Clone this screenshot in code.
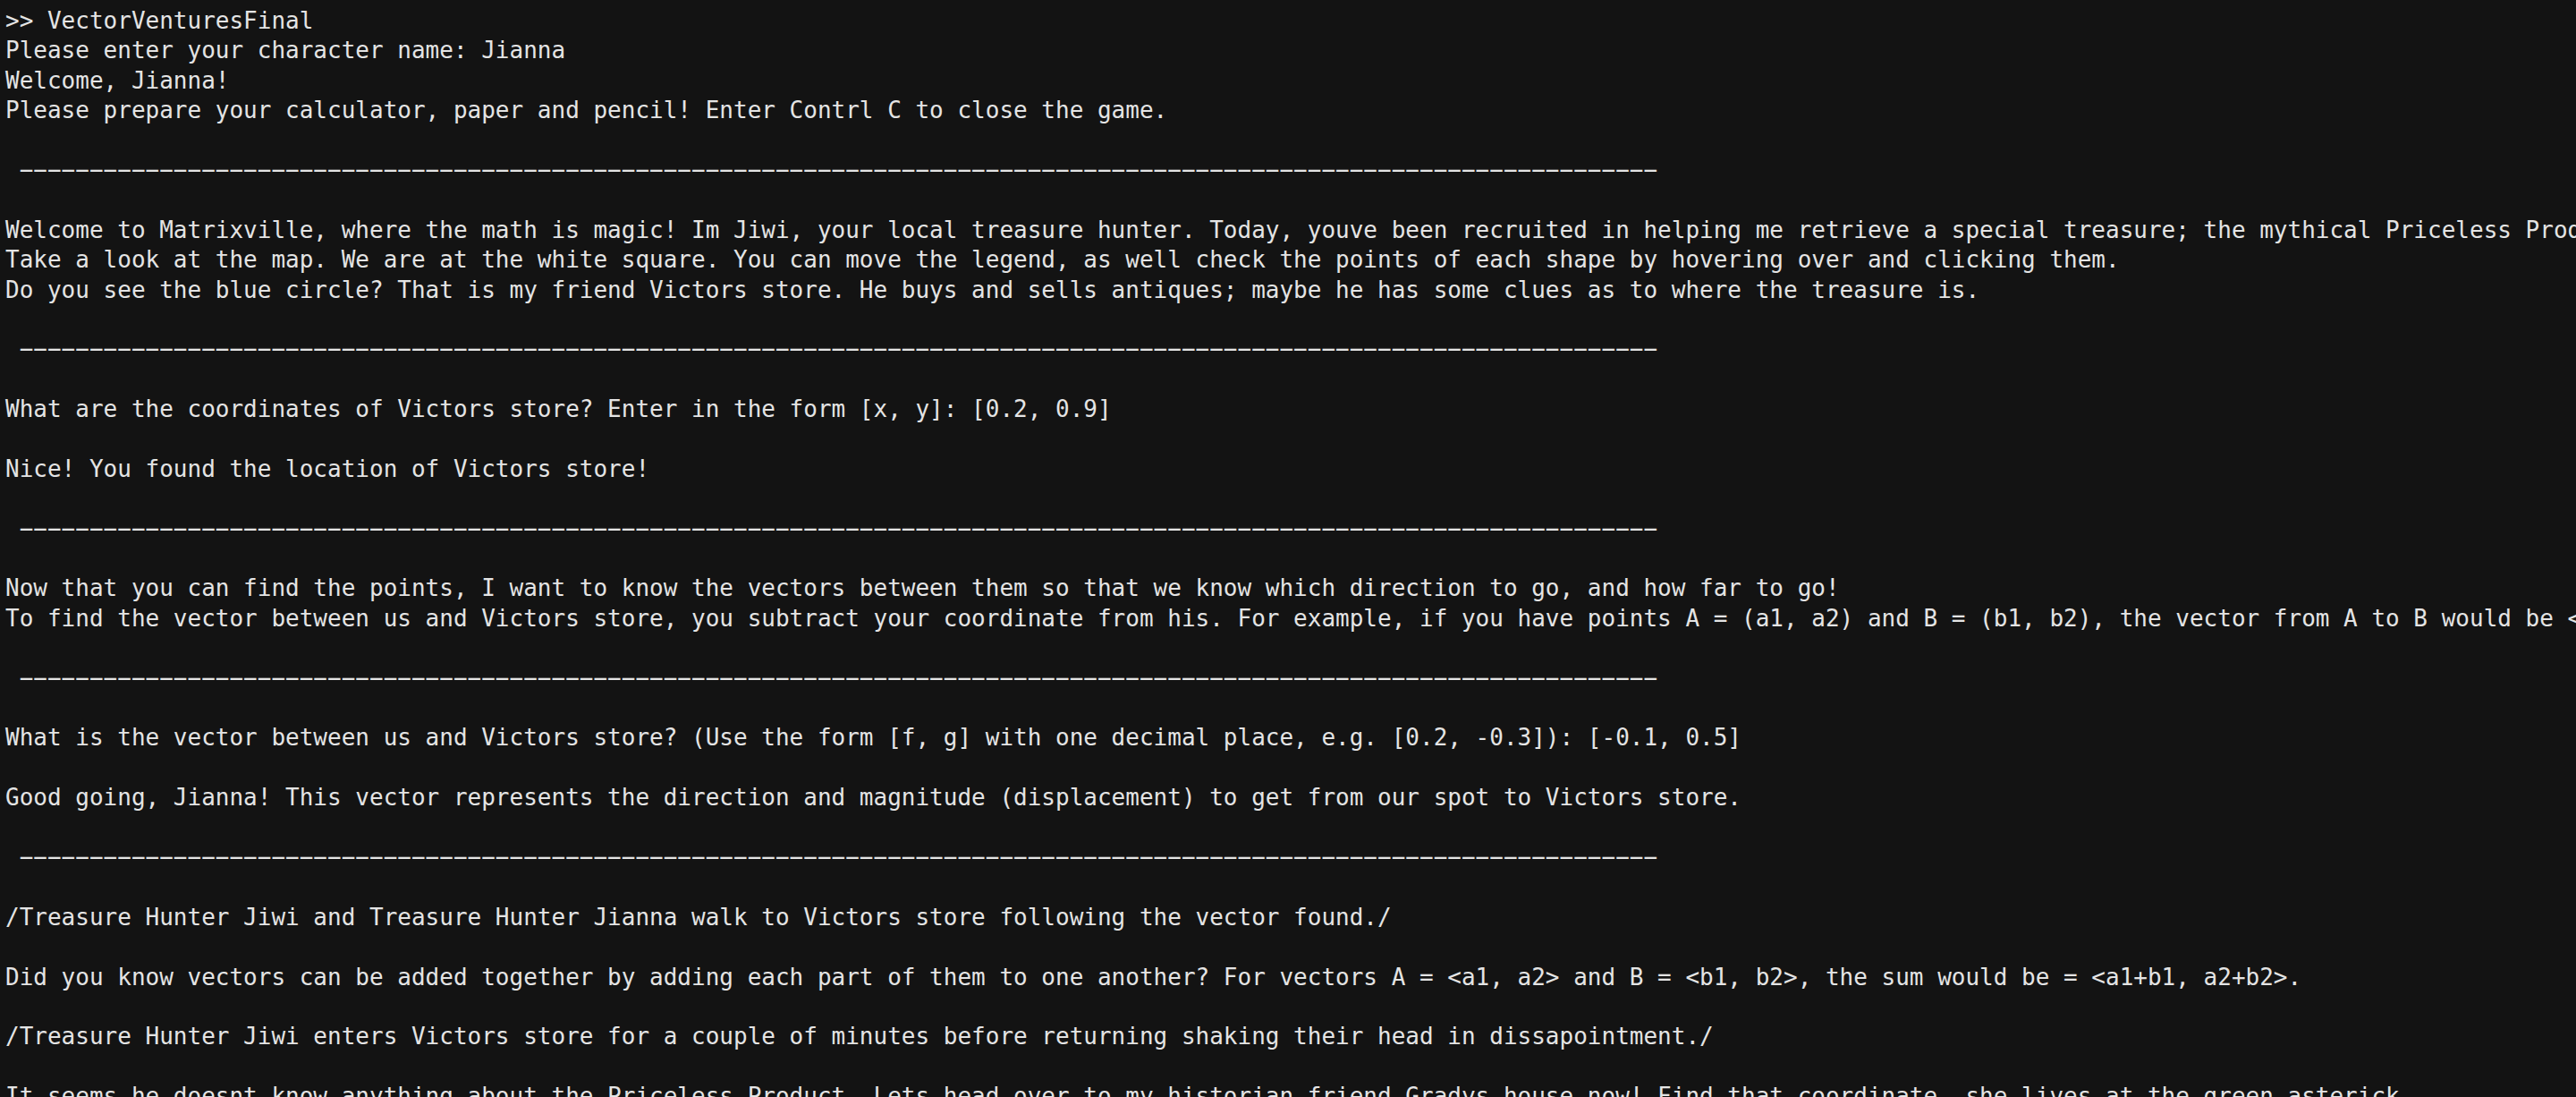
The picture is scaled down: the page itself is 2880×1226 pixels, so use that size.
const rule = " " + "−".repeat(117)

const lines: string[] = [
  ">> VectorVenturesFinal",
  "Please enter your character name: Jianna",
  "Welcome, Jianna!",
  "Please prepare your calculator, paper and pencil! Enter Contrl C to close the game.",
  "",
  rule,
  "",
  "Welcome to Matrixville, where the math is magic! Im Jiwi, your local treasure hunter. Today, youve been recruited in helping me retrieve a special treasure; the mythical Priceless Product.",
  "Take a look at the map. We are at the white square. You can move the legend, as well check the points of each shape by hovering over and clicking them.",
  "Do you see the blue circle? That is my friend Victors store. He buys and sells antiques; maybe he has some clues as to where the treasure is.",
  "",
  rule,
  "",
  "What are the coordinates of Victors store? Enter in the form [x, y]: [0.2, 0.9]",
  "",
  "Nice! You found the location of Victors store!",
  "",
  rule,
  "",
  "Now that you can find the points, I want to know the vectors between them so that we know which direction to go, and how far to go!",
  "To find the vector between us and Victors store, you subtract your coordinate from his. For example, if you have points A = (a1, a2) and B = (b1, b2), the vector from A to B would be <b1-a1, b2-a2>.",
  "",
  rule,
  "",
  "What is the vector between us and Victors store? (Use the form [f, g] with one decimal place, e.g. [0.2, -0.3]): [-0.1, 0.5]",
  "",
  "Good going, Jianna! This vector represents the direction and magnitude (displacement) to get from our spot to Victors store.",
  "",
  rule,
  "",
  "/Treasure Hunter Jiwi and Treasure Hunter Jianna walk to Victors store following the vector found./",
  "",
  "Did you know vectors can be added together by adding each part of them to one another? For vectors A = <a1, a2> and B = <b1, b2>, the sum would be = <a1+b1, a2+b2>.",
  "",
  "/Treasure Hunter Jiwi enters Victors store for a couple of minutes before returning shaking their head in dissapointment./",
  "",
  "It seems he doesnt know anything about the Priceless Product. Lets head over to my historian friend Gradys house now! Find that coordinate, she lives at the green asterick.",
]

export default function App() {
  return (
    <div className="h-screen w-full overflow-hidden bg-[#131313] pt-[7px] pl-[6px] text-[#e4e4e4]">
      <div className="font-['DejaVu_Sans_Mono','Liberation_Mono',monospace] text-[26px] leading-[33.4px] whitespace-pre">
        {lines.map((line, i) => (
          <div key={i} className="h-[33.4px]">
            {line}
          </div>
        ))}
      </div>
    </div>
  )
}
